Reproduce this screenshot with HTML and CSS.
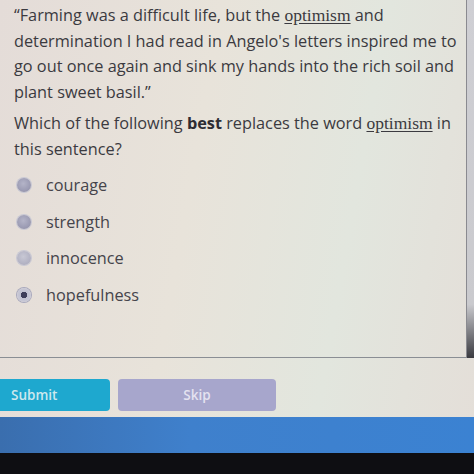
FILE: index.html
```html
<!DOCTYPE html>
<html>
<head>
<meta charset="utf-8">
<link rel="stylesheet" href="styles.css">
</head>
<body>
<div class="screen">
  <div class="panel">
    <div class="card">
      <p class="passage">“Farming was a difficult life, but the <span class="term">optimism</span> and determination I had read in Angelo's letters inspired me to go out once again and sink my hands into the rich soil and plant sweet basil.”</p>
      <p class="question">Which of the following <b>best</b> replaces the word <span class="term">optimism</span> in this sentence?</p>
      <ul class="options">
        <li class="option"><span class="radio"></span><span class="label">courage</span></li>
        <li class="option"><span class="radio"></span><span class="label">strength</span></li>
        <li class="option"><span class="radio light"></span><span class="label">innocence</span></li>
        <li class="option"><span class="radio checked"></span><span class="label">hopefulness</span></li>
      </ul>
    </div>
    <div class="edge"></div>
  </div>
  <div class="actions">
    <button class="btn submit">Submit</button>
    <button class="btn skip">Skip</button>
  </div>
  <div class="band"></div>
  <div class="bezel"></div>
</div>
</body>
</html>
```
FILE: styles.css
```css
html, body {
  margin: 0;
  padding: 0;
}
body {
  width: 474px;
  height: 474px;
  overflow: hidden;
  font-family: "Open Sans", "Liberation Sans", sans-serif;
  color: #3b3a40;
}
.screen {
  width: 474px;
  height: 474px;
  display: flex;
  flex-direction: column;
  background: linear-gradient(100deg, #e4dcd8 0%, #e8e3da 40%, #e2e6de 70%, #e4ded8 100%);
}
.panel {
  display: flex;
  height: 358px;
  flex: none;
}
.card {
  width: 452px;
  height: 357px;
  padding-left: 14px;
  border-right: 1px solid #8a8a90;
  border-bottom: 1px solid #8a8e94;
}
.edge {
  flex: 1;
  background: linear-gradient(180deg, #cfcfd4 0%, #cacace 85%, #3a3a40 100%);
}
.passage, .question {
  margin: 0;
  font-size: 16.3px;
  line-height: 25.5px;
}
.passage {
  padding-top: 3px;
}
.question {
  margin-top: 6px;
}
.term {
  font-family: "Liberation Serif", serif;
  font-size: 17.5px;
  line-height: 1;
  text-decoration: underline;
  text-underline-offset: 2px;
}
b {
  font-weight: 700;
  color: #2e2d33;
}
.options {
  list-style: none;
  margin: 11px 0 0;
  padding: 0;
  display: flex;
  flex-direction: column;
  gap: 12.7px;
}
.option {
  display: flex;
  align-items: center;
  height: 24px;
  font-size: 16.3px;
  color: #45444b;
}
.radio {
  width: 14px;
  height: 14px;
  border-radius: 50%;
  margin-left: 3px;
  margin-right: 15px;
  background: radial-gradient(circle at 45% 40%, #b4b4c8 0%, #9c9cb4 60%, #8a8aa2 100%);
  box-shadow: 0 0 0 1px #c8c8d4;
  flex: none;
}
.radio.light {
  background: radial-gradient(circle at 45% 40%, #c8c8d4 0%, #b0b0c2 70%, #a0a0b4 100%);
}
.radio.checked {
  background: radial-gradient(circle, #3e3e5a 0 3px, #c0c0d0 3.5px, #d0d0dc 100%);
  box-shadow: 0 0 0 1px #a8a8bc;
}
.label {
  display: block;
}
.actions {
  flex: none;
  height: 59px;
  display: flex;
  gap: 8px;
  padding-top: 21px;
  box-sizing: border-box;
}
.btn {
  border: none;
  border-radius: 4px;
  height: 32px;
  font-family: "Open Sans", "Liberation Sans", sans-serif;
  font-size: 13.5px;
  font-weight: 600;
  padding: 0;
}
.submit {
  width: 110px;
  background: #1ea8cf;
  color: #cde8ee;
  border-radius: 0 4px 4px 0;
  text-align: left;
  padding-left: 11px;
}
.skip {
  width: 158px;
  background: #a7a6cc;
  color: #e4e2f0;
}
.band {
  flex: none;
  height: 36px;
  background: linear-gradient(90deg, #3a6eae 0%, #3f80cc 40%, #3b82d2 100%);
}
.bezel {
  flex: 1;
  background: #0e0e12;
}
```
